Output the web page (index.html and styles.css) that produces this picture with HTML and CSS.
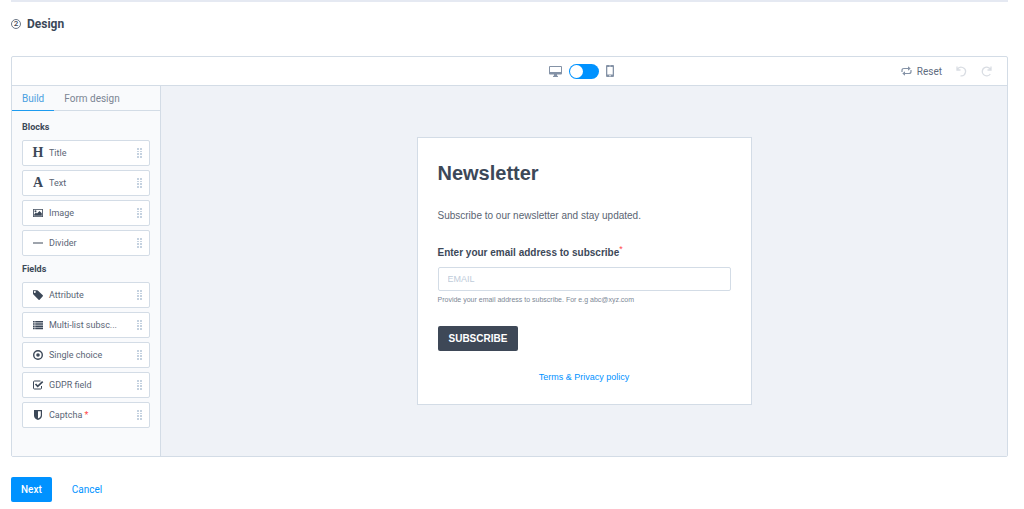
FILE: index.html
```html
<!DOCTYPE html>
<html lang="en">
<head>
    <meta charset="UTF-8">
    <meta name="viewport" content="width=device-width, initial-scale=1.0">
    <title>Design</title>
    <link rel="stylesheet" href="styles.css">
</head>
<body>
    <svg class="sprite" aria-hidden="true">
        <symbol id="grip" viewBox="0 0 6 10">
            <path d="M0 0h2v2H0zM3 0h2v2H3zM0 3h2v1H0zM3 3h2v1H3zM0 5h2v2H0zM3 5h2v2H3zM0 8h2v2H0zM3 8h2v2H3z"/>
        </symbol>
    </svg>

    <div class="page">
        <h1 class="step"><span class="step-number">2</span>Design</h1>

        <div class="builder">
            <div class="toolbar">
                <div class="device">
                    <svg width="13" height="11" viewBox="0 0 13 11"><path fill="#8492a6" fill-rule="evenodd" d="M1 0h11a1 1 0 0 1 1 1v6.500a1 1 0 0 1-1 1H8v1l1 .7v.8H4v-.8l1-.7v-1H1a1 1 0 0 1-1-1V1a1 1 0 0 1 1-1zm0 1v5h11V1z"/></svg>
                    <input type="checkbox" class="switch" id="device" aria-label="Mobile view">
                    <svg width="8" height="12" viewBox="0 0 8 12"><path fill="#8492a6" fill-rule="evenodd" d="M1 0h6a1 1 0 0 1 1 1v10a1 1 0 0 1-1 1H1a1 1 0 0 1-1-1V1a1 1 0 0 1 1-1zm.3 2v7.500h5.400V2zM3 .7v.6h2V.7zM4 10a.7.7 0 1 0 .01 0z"/></svg>
                </div>
                <div class="history">
                    <button type="button" class="reset">
                        <svg width="11" height="10" viewBox="0 0 11 10" fill="none" stroke="#8492a6" stroke-width="1.200"><path d="M1 6V4.500Q1 2.500 3 2.500H8M10 4v1.500Q10 7.500 8 7.500H3"/><path fill="#8492a6" stroke="none" d="M7 .3l2.700 2.200L7 4.700zM4 5.300L1.300 7.500 4 9.700z"/></svg>
                        Reset
                    </button>
                    <button type="button" class="icon-button" aria-label="Undo">
                        <svg width="11" height="11" viewBox="0 0 11 11" fill="none" stroke="#d9dde3" stroke-width="1.300"><path d="M1 .5v3.500h3.500M1.300 3.800A4.300 4.300 0 1 1 4.500 9.800"/></svg>
                    </button>
                    <button type="button" class="icon-button" aria-label="Redo">
                        <svg width="11" height="11" viewBox="0 0 11 11" fill="none" stroke="#d9dde3" stroke-width="1.300"><path d="M10 .5v3.500H6.500M9.700 3.800A4.400 4.400 0 1 0 9.300 8"/></svg>
                    </button>
                </div>
            </div>

            <div class="workspace">
                <aside class="sidebar">
                    <nav class="tabs">
                        <a href="#build" class="tab active">Build</a>
                        <a href="#design" class="tab">Form design</a>
                    </nav>
                    <div class="palette">
                        <h2>Blocks</h2>
                        <div class="list">
                            <button type="button" class="block"><span class="icon letter">H</span><span class="name">Title</span><svg class="grip"><use href="#grip"/></svg></button>
                            <button type="button" class="block"><span class="icon letter">A</span><span class="name">Text</span><svg class="grip"><use href="#grip"/></svg></button>
                            <button type="button" class="block">
                                <svg class="icon" viewBox="0 0 12 12"><path fill-rule="evenodd" d="M1.500 2h9a.5.5 0 0 1 .5.5v7a.5.5 0 0 1-.5.5h-9a.5.5 0 0 1-.5-.5v-7a.5.5 0 0 1 .5-.5zm.3.700v6.600h8.400V2.700z"/><circle cx="3.500" cy="4.300" r="1"/><path d="M2.200 8.800V7.300L4 5.600l1 1L7.500 4l2.300 2.300v2.500z"/></svg>
                                <span class="name">Image</span><svg class="grip"><use href="#grip"/></svg>
                            </button>
                            <button type="button" class="block">
                                <svg class="icon" viewBox="0 0 12 12"><path d="M1 5.500h10v1H1z"/></svg>
                                <span class="name">Divider</span><svg class="grip"><use href="#grip"/></svg>
                            </button>
                        </div>
                        <h2>Fields</h2>
                        <div class="list">
                            <button type="button" class="block">
                                <svg class="icon" viewBox="0 0 12 12"><path fill-rule="evenodd" d="M1 1.200h3.800l1 .4 5 4.700q.4.500 0 1L7.600 10.700q-.5.400-1 0L1.400 5.600 1 4.700zm1.800.9a.9.900 0 1 0 .01 0z"/></svg>
                                <span class="name">Attribute</span><svg class="grip"><use href="#grip"/></svg>
                            </button>
                            <button type="button" class="block">
                                <svg class="icon" viewBox="0 0 12 12"><path d="M1 2h1.700v1.600H1zM3.200 2H11v1.600H3.200zM1 4.200h1.700v1.600H1zM3.200 4.200H11v1.600H3.200zM1 6.400h1.700V8H1zM3.200 6.400H11V8H3.200zM1 8.600h1.700v1.600H1zM3.200 8.600H11v1.600H3.200z"/></svg>
                                <span class="name">Multi-list subsc...</span><svg class="grip"><use href="#grip"/></svg>
                            </button>
                            <button type="button" class="block">
                                <svg class="icon" viewBox="0 0 12 12"><circle cx="6" cy="6" r="4.300" fill="none" stroke="#3c4858" stroke-width="1.400"/><circle cx="6" cy="6" r="1.800"/></svg>
                                <span class="name">Single choice</span><svg class="grip"><use href="#grip"/></svg>
                            </button>
                            <button type="button" class="block">
                                <svg class="icon" viewBox="0 0 12 12" stroke="#3c4858"><path fill="none" d="M9.500 7v2q0 1-1 1H2.500q-1 0-1-1V3q0-1 1-1H8.500"/><path fill="none" stroke-width="1.700" d="M3.500 5l2.200 2.300L10.700 2.600"/></svg>
                                <span class="name">GDPR field</span><svg class="grip"><use href="#grip"/></svg>
                            </button>
                            <button type="button" class="block">
                                <svg class="icon" viewBox="0 0 12 12"><path fill-rule="evenodd" d="M2 1h8v5.500Q10 9.500 6 11 2 9.500 2 6.500zM6 2.200v7.400q2.800-1.200 2.800-3.200V2.200z"/></svg>
                                <span class="name">Captcha <span class="required">*</span></span><svg class="grip"><use href="#grip"/></svg>
                            </button>
                        </div>
                    </div>
                </aside>

                <main class="canvas">
                    <form class="card">
                        <h2>Newsletter</h2>
                        <p class="intro">Subscribe to our newsletter and stay updated.</p>
                        <label for="email">Enter your email address to subscribe<sup>*</sup></label>
                        <input type="email" id="email" placeholder="EMAIL">
                        <p class="hint">Provide your email address to subscribe. For e.g abc@xyz.com</p>
                        <button type="submit" class="subscribe">SUBSCRIBE</button>
                        <a href="#terms" class="terms">Terms &amp; Privacy policy</a>
                    </form>
                </main>
            </div>
        </div>

        <div class="actions">
            <button type="button" class="next">Next</button>
            <a href="#cancel" class="cancel">Cancel</a>
        </div>
    </div>
</body>
</html>
```
FILE: styles.css
```css
* {
    box-sizing: border-box;
}
body {
    font-family: Roboto, sans-serif;
    font-size: 10px;
    background: white;
    color: #3c4858;
    margin: 0;
}
h1, h2, p {
    margin: 0;
}
button {
    font-family: inherit;
    border: none;
    background: none;
    padding: 0;
    cursor: pointer;
}
a {
    color: #0092ff;
    text-decoration: none;
}
svg {
    display: block;
    flex-shrink: 0;
}
.sprite {
    display: none;
}
.page {
    margin: 0 16px 0 11px;
    border-top: 2px solid #e5e9f2;
}
.step {
    display: flex;
    align-items: center;
    gap: 6px;
    font-size: 12px;
    line-height: 16px;
    padding: 14px 0 24px;
}
.step-number {
    width: 10px;
    height: 10px;
    border: 1px solid #6b7685;
    border-radius: 50%;
    font-size: 8px;
    font-weight: 500;
    line-height: 8px;
    text-align: center;
}
.builder {
    border: 1px solid #d3dce6;
    border-radius: 2px;
}
.toolbar {
    display: grid;
    grid-template-columns: 1fr auto 1fr;
    align-items: center;
    height: 28px;
    padding-right: 15px;
}
.device {
    grid-column: 2;
    display: flex;
    align-items: center;
    gap: 7px;
    padding-left: 159px;
}
.switch {
    appearance: none;
    width: 30px;
    height: 15px;
    margin: 0;
    padding: 1px;
    border-radius: 8px;
    background: #0092ff;
}
.switch::before {
    content: "";
    display: block;
    width: 13px;
    height: 13px;
    border-radius: 50%;
    background: white;
}
.history {
    display: flex;
    align-items: center;
    justify-content: flex-end;
    gap: 14px;
}
.reset {
    display: flex;
    align-items: center;
    gap: 5px;
    font-size: 10px;
    color: #5f6d80;
}
.workspace {
    display: flex;
    border-top: 1px solid #d3dce6;
}
.sidebar {
    width: 149px;
    flex-shrink: 0;
    background: #f9fafc;
    border-right: 1px solid #d3dce6;
}
.tabs {
    display: flex;
    border-bottom: 1px solid #d3dce6;
}
.tab {
    padding: 2px 10px 0;
    margin-bottom: -1px;
    line-height: 22px;
    color: #7b8593;
    border-bottom: 1px solid transparent;
}
.tab.active {
    color: #4a9fe0;
    border-bottom-color: #1d9bf0;
}
.palette {
    padding: 10px 10px 26px;
}
.palette h2 {
    font-size: 9px;
    line-height: 12px;
    margin-bottom: 7px;
}
.list {
    display: grid;
    gap: 4px;
}
.list + h2 {
    margin-top: 7px;
}
.block {
    display: flex;
    align-items: center;
    min-width: 0;
    height: 26px;
    padding: 0 6px 0 9px;
    font-size: 9px;
    text-align: left;
    color: #5a6575;
    background: white;
    border: 1px solid #d3dce6;
    border-radius: 2px;
}
.icon {
    width: 12px;
    height: 12px;
    flex-shrink: 0;
    fill: #3c4858;
}
.letter {
    font-family: "Liberation Serif", serif;
    font-size: 14px;
    font-weight: bold;
    line-height: 12px;
    text-align: center;
    color: #3c4858;
}
.name {
    margin-left: 5px;
    white-space: nowrap;
}
.required {
    color: #ff4949;
}
.grip {
    width: 6px;
    height: 10px;
    margin-left: auto;
    fill: #c5d2e0;
}
.canvas {
    flex: 1;
    display: flex;
    align-items: flex-start;
    justify-content: center;
    padding: 51px 20px;
    background: #eff2f7;
}
.card {
    display: flex;
    flex-direction: column;
    align-items: flex-start;
    width: 100%;
    max-width: 335px;
    padding: 20px;
    font-family: "Liberation Sans", Arial, sans-serif;
    background: white;
    border: 1px solid #d3dce6;
}
.card h2 {
    font-size: 20px;
    line-height: 30px;
}
.intro {
    margin-top: 21px;
    line-height: 14px;
    color: #5a6472;
}
.card label {
    margin-top: 22px;
    font-size: 10px;
    font-weight: bold;
    line-height: 16px;
}
.card sup {
    color: #ff4949;
    font-size: 9px;
    font-weight: normal;
    line-height: 0;
}
.card input {
    width: 100%;
    height: 24px;
    margin-top: 6px;
    padding: 0 9px;
    font-family: inherit;
    font-size: 9px;
    border: 1px solid #d3dce6;
    border-radius: 2px;
}
.card input::placeholder {
    color: #c0ccda;
}
.hint {
    margin-top: 3px;
    font-size: 7px;
    line-height: 12px;
    color: #7d8896;
}
.subscribe {
    margin-top: 20px;
    padding: 0 11px;
    font-size: 10px;
    font-weight: bold;
    line-height: 25px;
    color: white;
    background: #3e4857;
    border-radius: 2px;
}
.terms {
    align-self: center;
    margin: 20px 0 1px;
    font-size: 9px;
    line-height: 12px;
}
.actions {
    display: flex;
    align-items: center;
    gap: 20px;
    padding-top: 20px;
}
.next {
    padding: 0 10px;
    font-size: 10px;
    font-weight: 500;
    line-height: 25px;
    color: white;
    background: #0092ff;
    border-radius: 2px;
}
```
